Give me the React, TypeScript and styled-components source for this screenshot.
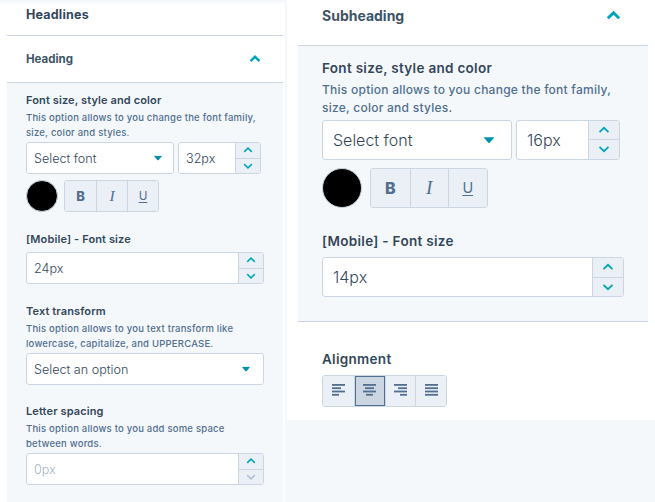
import { ReactNode } from "react";
import styled, { createGlobalStyle, ThemeProvider } from "styled-components";

const small = {
  sideTitle: 11.5,
  label: 11,
  labelTrack: 0.12,
  hint: 9.5,
  hintTrack: 0.22,
  hintLine: 14.5,
  input: 12.6,
  field: 32,
  pad: 7,
  stepper: 25,
  swatch: 32,
  styleFont: 13,
  afterLabel: 6,
  afterHint: 2,
  bodyTop: 10,
  styleTop: 6,
  caretScale: 0.85,
  stepScale: 0.85,
};

const big = {
  sideTitle: 14,
  label: 13.5,
  labelTrack: 0.3,
  hint: 12,
  hintTrack: 0.25,
  hintLine: 18,
  input: 16,
  field: 40,
  pad: 10,
  stepper: 31,
  swatch: 40,
  styleFont: 16,
  afterLabel: 8,
  afterHint: 3,
  bodyTop: 14,
  styleTop: 8,
  caretScale: 1.1,
  stepScale: 1,
};

const GlobalStyle = createGlobalStyle`
  html, body {
    margin: 0;
    padding: 0;
    height: 502px;
    overflow: hidden;
    background: #f5f8fa;
  }
  * {
    box-sizing: border-box;
  }
  body {
    font-family: Inter, "Noto Sans", "Liberation Sans", sans-serif;
    color: #33475b;
  }
`;

const Page = styled.div`
  display: flex;
  width: 655px;
  height: 502px;
  gap: 2px;
`;

const LeftColumn = styled.div`
  width: 285px;
  height: 502px;
  background: linear-gradient(#f3f6f9, #fff 5px);
  padding: 0 2px 0 7px;
  display: flex;
  flex-direction: column;
`;

const RightColumn = styled.div`
  flex: 1;
  align-self: flex-start;
  height: 420px;
  background: #fff;
  padding: 0 7px 0 11px;
  display: flex;
  flex-direction: column;
`;

const PageTitle = styled.div`
  height: 36px;
  padding: 7px 0 0 19px;
  font-size: 12.5px;
  line-height: 15px;
  font-weight: 700;
  letter-spacing: 0.2px;
  border-bottom: 1px solid #cbd6e2;
`;

const AccordionHead = styled.div<{ $height: number; $inset: number; $end: number; $lift?: number }>`
  display: flex;
  align-items: center;
  justify-content: space-between;
  height: ${(p) => p.$height}px;
  padding: 0 ${(p) => p.$end}px ${(p) => p.$lift ?? 0}px ${(p) => p.$inset}px;
  border-bottom: 1px solid #cbd6e2;
  font-size: ${(p) => p.theme.sideTitle}px;
  font-weight: 700;
  color: #3e5468;
`;

const HeadToggle = styled.span`
  display: flex;
  color: #00a4bd;
`;

const AccordionBody = styled.div<{ $inset: number; $height?: number; $fill?: boolean }>`
  background: #f5f8fa;
  padding: ${(p) => p.theme.bodyTop}px 0 0 ${(p) => p.$inset}px;
  ${(p) => p.$fill && "flex: 1;"}
  ${(p) => p.$height && `height: ${p.$height}px; border-bottom: 1px solid #cbd6e2;`}
`;

const Label = styled.div`
  font-size: ${(p) => p.theme.label}px;
  line-height: ${(p) => p.theme.label + 3}px;
  letter-spacing: ${(p) => p.theme.labelTrack}px;
  font-weight: 600;
  color: #33475b;
`;

const Hint = styled.div<{ $width: number }>`
  width: ${(p) => p.$width}px;
  margin-top: 4px;
  font-size: ${(p) => p.theme.hint}px;
  line-height: ${(p) => p.theme.hintLine}px;
  letter-spacing: ${(p) => p.theme.hintTrack}px;
  font-weight: 500;
  color: #516f90;
`;

const Row = styled.div<{ $afterHint?: boolean }>`
  display: flex;
  align-items: center;
  gap: 4px;
  margin-top: ${(p) => (p.$afterHint ? p.theme.afterHint : p.theme.afterLabel)}px;
`;

const FieldBox = styled.div<{ $width: number }>`
  display: flex;
  align-items: stretch;
  width: ${(p) => p.$width}px;
  height: ${(p) => p.theme.field}px;
  background: #fff;
  border: 1px solid #cbd6e2;
  border-radius: 3px;
  overflow: hidden;
  font-size: ${(p) => p.theme.input}px;
  font-weight: 300;
`;

const FieldValue = styled.div<{ $muted?: boolean }>`
  flex: 1;
  display: flex;
  align-items: center;
  padding-left: ${(p) => p.theme.pad}px;
  color: ${(p) => (p.$muted ? "#a3b4c6" : "#33475b")};
`;

const Stepper = styled.div`
  display: flex;
  flex-direction: column;
  width: ${(p) => p.theme.stepper}px;
  border-left: 1px solid #cbd6e2;
`;

const StepButton = styled.div<{ $first?: boolean; $off?: boolean }>`
  flex: 1;
  display: flex;
  align-items: center;
  justify-content: center;
  background: #eaf0f6;
  color: ${(p) => (p.$off ? "#b0c1d4" : "#00a4bd")};
  ${(p) => p.$first && "border-bottom: 1px solid #cbd6e2;"}
  svg {
    transform: scale(${(p) => p.theme.stepScale});
  }
`;

const CaretSlot = styled.div<{ $end: number }>`
  display: flex;
  align-items: center;
  padding-right: ${(p) => p.$end}px;
  color: #0091ae;
  svg {
    transform: scale(${(p) => p.theme.caretScale});
  }
`;

const Swatch = styled.div`
  width: ${(p) => p.theme.swatch}px;
  height: ${(p) => p.theme.swatch}px;
  border-radius: 50%;
  background: #000;
  border: 1px solid #cbd6e2;
`;

const ButtonGroup = styled.div`
  display: flex;
  border: 1px solid #cbd6e2;
  border-radius: 3px;
  overflow: hidden;
`;

const ToolButton = styled.div<{ $size: number; $active?: boolean; $h: number }>`
  width: ${(p) => p.$size}px;
  height: ${(p) => p.$h}px;
  display: flex;
  align-items: center;
  justify-content: center;
  background: ${(p) => (p.$active ? "#cbd6e2" : "#eaf0f6")};
  color: #516f90;
  font-size: ${(p) => p.theme.styleFont}px;
  box-shadow: ${(p) => (p.$active ? "inset 0 0 0 1px #516f90" : "none")};
  & + & {
    border-left: 1px solid #cbd6e2;
  }
`;

const BoldMark = styled.span`
  font-weight: 800;
`;

const ItalicMark = styled.span`
  font-family: "Liberation Serif", serif;
  font-style: italic;
  font-size: 1.2em;
`;

const UnderlineMark = styled.span`
  text-decoration: underline;
  text-underline-offset: 2px;
  font-size: 0.9em;
`;

const StyleRow = styled.div<{ $gap: number }>`
  display: flex;
  align-items: center;
  gap: ${(p) => p.$gap}px;
  margin-top: ${(p) => p.theme.styleTop}px;
`;

const Block = styled.div<{ $top: number }>`
  margin-top: ${(p) => p.$top}px;
`;

const AlignSection = styled.div`
  padding: 29px 0 0 24px;
  ${Row} {
    margin-top: 7px;
  }
`;

const Chevron = ({ size, up, weight = 2.4 }: { size: number; up?: boolean; weight?: number }) => (
  <svg width={size} height={size} viewBox="0 0 12 12" fill="none" stroke="currentColor" strokeWidth={weight}>
    <path d={up ? "M1.5 8.2 6 3.8l4.5 4.4" : "M1.5 3.8 6 8.2l4.5-4.4"} />
  </svg>
);

const Caret = () => (
  <svg width="10" height="6" viewBox="0 0 10 6" fill="currentColor">
    <path d="M0 0.4h10L5.6 5.6a.8.8 0 0 1-1.2 0z" />
  </svg>
);

const AlignIcon = ({ rows }: { rows: [number, number][] }) => (
  <svg width="13" height="13" viewBox="0 0 13 13" fill="#516f90">
    {rows.map(([x, w], i) => (
      <rect key={i} x={x} y={i * 3.3} width={w} height="1.8" />
    ))}
  </svg>
);

const SelectField = ({ value, width, end }: { value: string; width: number; end: number }) => (
  <FieldBox $width={width}>
    <FieldValue>{value}</FieldValue>
    <CaretSlot $end={end}>
      <Caret />
    </CaretSlot>
  </FieldBox>
);

const NumberField = ({ value, width, muted, off }: { value: string; width: number; muted?: boolean; off?: boolean }) => (
  <FieldBox $width={width}>
    <FieldValue $muted={muted}>{value}</FieldValue>
    <Stepper>
      <StepButton $first>
        <Chevron size={12} up weight={1.8} />
      </StepButton>
      <StepButton $off={off}>
        <Chevron size={12} weight={1.8} />
      </StepButton>
    </Stepper>
  </FieldBox>
);

const StyleButtons = ({ size, h }: { size: number; h: number }) => (
  <ButtonGroup>
    <ToolButton $size={size} $h={h}>
      <BoldMark>B</BoldMark>
    </ToolButton>
    <ToolButton $size={size} $h={h}>
      <ItalicMark>I</ItalicMark>
    </ToolButton>
    <ToolButton $size={size} $h={h}>
      <UnderlineMark>U</UnderlineMark>
    </ToolButton>
  </ButtonGroup>
);

const Sizes = ({ theme, children }: { theme: typeof small; children: ReactNode }) => (
  <ThemeProvider theme={theme}>{children}</ThemeProvider>
);

export default function App() {
  return (
    <Page>
      <GlobalStyle />
      <Sizes theme={small}>
        <LeftColumn>
          <PageTitle>Headlines</PageTitle>
          <AccordionHead $height={47} $inset={19} $end={22}>
            Heading
            <HeadToggle>
              <Chevron size={12} up />
            </HeadToggle>
          </AccordionHead>
          <AccordionBody $inset={19} $fill>
            <Label>Font size, style and color</Label>
            <Hint $width={240}>This option allows to you change the font family, size, color and styles.</Hint>
            <Row $afterHint>
              <SelectField value="Select font" width={148} end={10} />
              <NumberField value="32px" width={83} />
            </Row>
            <StyleRow $gap={6}>
              <Swatch />
              <StyleButtons size={31} h={30} />
            </StyleRow>
            <Block $top={20}>
              <Label>[Mobile] - Font size</Label>
              <Row>
                <NumberField value="24px" width={238} />
              </Row>
            </Block>
            <Block $top={20}>
              <Label>Text transform</Label>
              <Hint $width={240}>This option allows to you text transform like lowercase, capitalize, and UPPERCASE.</Hint>
              <Row $afterHint>
                <SelectField value="Select an option" width={238} end={12} />
              </Row>
            </Block>
            <Block $top={19}>
              <Label>Letter spacing</Label>
              <Hint $width={225}>This option allows to you add some space between words.</Hint>
              <Row $afterHint>
                <NumberField value="0px" width={238} muted off />
              </Row>
            </Block>
          </AccordionBody>
        </LeftColumn>
      </Sizes>
      <Sizes theme={big}>
        <RightColumn>
          <AccordionHead $height={46} $inset={24} $end={27} $lift={14}>
            Subheading
            <HeadToggle>
              <Chevron size={15} up />
            </HeadToggle>
          </AccordionHead>
          <AccordionBody $inset={24} $height={276}>
            <Label>Font size, style and color</Label>
            <Hint $width={310}>This option allows to you change the font family, size, color and styles.</Hint>
            <Row $afterHint>
              <SelectField value="Select font" width={190} end={17} />
              <NumberField value="16px" width={104} />
            </Row>
            <StyleRow $gap={8}>
              <Swatch />
              <StyleButtons size={38.5} h={38} />
            </StyleRow>
            <Block $top={25}>
              <Label>[Mobile] - Font size</Label>
              <Row>
                <NumberField value="14px" width={302} />
              </Row>
            </Block>
          </AccordionBody>
          <AlignSection>
            <Label>Alignment</Label>
            <Row>
              <ButtonGroup>
                <ToolButton $size={30.75} $h={30}>
                  <AlignIcon rows={[[0, 13], [0, 9], [0, 13], [0, 7]]} />
                </ToolButton>
                <ToolButton $size={30.75} $h={30} $active>
                  <AlignIcon rows={[[0, 13], [2, 9], [0, 13], [3, 7]]} />
                </ToolButton>
                <ToolButton $size={30.75} $h={30}>
                  <AlignIcon rows={[[0, 13], [4, 9], [0, 13], [6, 7]]} />
                </ToolButton>
                <ToolButton $size={30.75} $h={30}>
                  <AlignIcon rows={[[0, 13], [0, 13], [0, 13], [0, 13]]} />
                </ToolButton>
              </ButtonGroup>
            </Row>
          </AlignSection>
        </RightColumn>
      </Sizes>
    </Page>
  );
}
